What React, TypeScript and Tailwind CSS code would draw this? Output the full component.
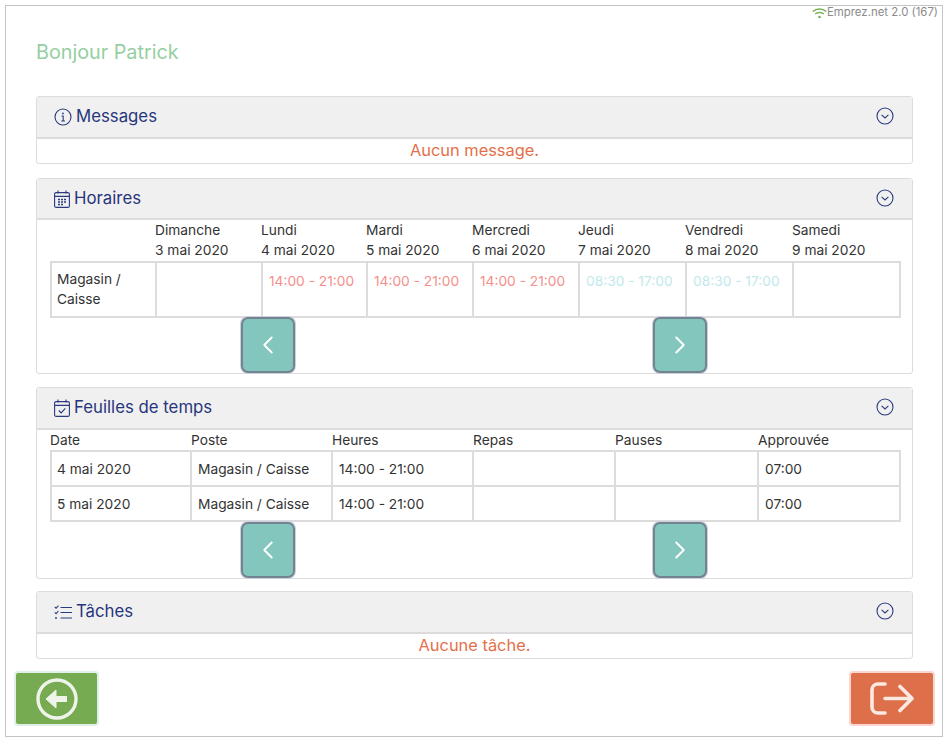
import type { ReactNode } from 'react';
import { ChevronLeft, ChevronRight } from 'lucide-react';

const days = [
  ['Dimanche', '3 mai 2020'],
  ['Lundi', '4 mai 2020'],
  ['Mardi', '5 mai 2020'],
  ['Mercredi', '6 mai 2020'],
  ['Jeudi', '7 mai 2020'],
  ['Vendredi', '8 mai 2020'],
  ['Samedi', '9 mai 2020'],
];

const shifts = [
  { text: '', color: '' },
  { text: '14:00 - 21:00', color: 'text-[#f58f8c]' },
  { text: '14:00 - 21:00', color: 'text-[#f58f8c]' },
  { text: '14:00 - 21:00', color: 'text-[#f58f8c]' },
  { text: '08:30 - 17:00', color: 'text-[#bfe9ec]' },
  { text: '08:30 - 17:00', color: 'text-[#bfe9ec]' },
  { text: '', color: '' },
];

const sheetHeaders = ['Date', 'Poste', 'Heures', 'Repas', 'Pauses', 'Approuvée'];
const sheetRows = [
  ['4 mai 2020', 'Magasin / Caisse', '14:00 - 21:00', '', '', '07:00'],
  ['5 mai 2020', 'Magasin / Caisse', '14:00 - 21:00', '', '', '07:00'],
];

function InfoIcon() {
  return (
    <svg width="18" height="18" viewBox="0 0 18 18" fill="none" stroke="#2b3a7f" strokeWidth="1.1">
      <circle cx="9" cy="9" r="8" />
      <path d="M7.5 8h1.7v5M7.2 13h3.8" />
      <circle cx="8.9" cy="5.4" r="0.9" fill="#2b3a7f" stroke="none" />
    </svg>
  );
}

function CalendarIcon() {
  return (
    <svg width="16" height="18" viewBox="0 0 16 18" fill="none" stroke="#2b3a7f" strokeWidth="1.1">
      <rect x="0.6" y="2.6" width="14.8" height="14.8" rx="1.5" />
      <path d="M0.6 6.4h14.8M4 0.6v3M12 0.6v3" />
      <path d="M4 9.500h2M7 9.500h2M10 9.500h2M4 12h2M7 12h2M10 12h2M4 14.500h2M7 14.500h2" strokeWidth="1.4" />
    </svg>
  );
}

function CalendarCheckIcon() {
  return (
    <svg width="16" height="18" viewBox="0 0 16 18" fill="none" stroke="#2b3a7f" strokeWidth="1.1">
      <rect x="0.6" y="2.6" width="14.8" height="14.8" rx="1.5" />
      <path d="M0.6 6.4h14.8M4 0.6v3M12 0.6v3" />
      <path d="M4.8 11.500l2.3 2.4 4.2-4.6" />
    </svg>
  );
}

function TasksIcon() {
  return (
    <svg width="18" height="15" viewBox="0 0 18 15" fill="none" stroke="#2b3a7f" strokeWidth="1.1">
      <path d="M0.8 2l1.3 1.3L4.400 0.6M0.8 7.400l1.3 1.3 2.3-2.7" />
      <circle cx="2" cy="13" r="0.9" fill="#2b3a7f" stroke="none" />
      <path d="M6.500 2.500H18M6.500 7.500H18M6.500 13H18" />
    </svg>
  );
}

function ToggleIcon() {
  return (
    <svg className="mb-[2px]" width="18" height="18" viewBox="0 0 18 18" fill="none" stroke="#2b3a7f" strokeWidth="1.1">
      <circle cx="9" cy="9" r="8" />
      <path d="M5.6 7.800L9 11l3.400-3.200" />
    </svg>
  );
}

function WifiIcon() {
  return (
    <svg width="15" height="11" viewBox="0 0 15 11" fill="none" stroke="#76ae51" strokeWidth="1.4">
      <path d="M0.8 3.600C4.400 0.1 10.600 0.1 14.200 3.600" />
      <path d="M3.200 6C5.500 3.900 9.500 3.900 11.800 6" />
      <circle cx="7.500" cy="9" r="1.3" fill="#76ae51" stroke="none" />
    </svg>
  );
}

function Panel({
  icon,
  title,
  className,
  headerHeight = 'h-[42px]',
  children,
}: {
  icon: ReactNode;
  title: string;
  className: string;
  headerHeight?: string;
  children: ReactNode;
}) {
  return (
    <section className={`rounded-[3px] border border-[#dcdcdc] bg-white ${className}`}>
      <header className={`flex items-center justify-between border-b-2 border-[#dcdcdc] bg-[#f0f0f0] pl-[17px] pr-[18px] ${headerHeight}`}>
        <div className="flex items-center gap-[4px]">
          {icon}
          <span className="text-[16.8px] text-[#27367c]">{title}</span>
        </div>
        <ToggleIcon />
      </header>
      {children}
    </section>
  );
}

function EmptyRow({ text }: { text: string }) {
  return <div className="flex h-[24px] items-center justify-center pb-px text-[16.4px] text-[#e46f4b]">{text}</div>;
}

function Pager() {
  return (
    <div className="flex h-[56px] pl-[204px]">
      <button className="flex h-[56px] w-[54px] items-center justify-center rounded-[7px] border-2 border-[#74848f] bg-[#82c6bd] shadow-[0_0_0_1px_#c9d0e4]">
        <ChevronLeft className="size-[30px] text-white" strokeWidth={1.5} />
      </button>
      <button className="ml-[358px] flex h-[56px] w-[54px] items-center justify-center rounded-[7px] border-2 border-[#74848f] bg-[#82c6bd] shadow-[0_0_0_1px_#c9d0e4]">
        <ChevronRight className="size-[30px] text-white" strokeWidth={1.5} />
      </button>
    </div>
  );
}

export default function App() {
  return (
    <div className="h-[744px] w-[948px] bg-white p-[5px] font-['Inter',sans-serif] text-[13.75px] text-[#333]">
      <div className="h-[732px] w-[938px] border border-[#c4c4c4]">
        <div className="flex h-[11px] items-center justify-end pr-[4px] pt-[3px] text-[11.4px] text-[#8b8b8b]">
          <WifiIcon />
          <span>Emprez.net 2.0 (167)</span>
        </div>
        <div className="pl-[30px] pr-[29px]">
          <h1 className="mt-[23px] text-[19.75px] leading-[24px] text-[#95cfa2]">Bonjour Patrick</h1>
          <div className="mt-[32px] flex flex-col">
            <Panel icon={<InfoIcon />} title="Messages" className="">
              <EmptyRow text="Aucun message." />
            </Panel>
            <Panel icon={<CalendarIcon />} title="Horaires" className="mt-[14px]" headerHeight="h-[41px]">
              <div className="pl-[13px] pr-[11px]">
                <div className="grid h-[41px] grid-cols-[105px_106px_105px_106px_106px_107px_107px_109px] items-center pb-[2px] leading-[20px]">
                  <div />
                  {days.map(([day, date]) => (
                    <div key={day}>
                      <div>{day}</div>
                      <div>{date}</div>
                    </div>
                  ))}
                </div>
                <div className="grid h-[57px] grid-cols-[103px_106px_105px_106px_106px_107px_107px_107px] border-2 border-[#dcdcdc]">
                  <div className="flex items-center px-[5px] pb-[2px] leading-[20px]">Magasin / Caisse</div>
                  {shifts.map((s, i) => (
                    <div key={i} className={`border-l-2 border-[#dcdcdc] pl-[6px] pt-[8px] ${s.color}`}>
                      {s.text}
                    </div>
                  ))}
                </div>
              </div>
              <div className="-mt-px">
                <Pager />
              </div>
            </Panel>
            <Panel icon={<CalendarCheckIcon />} title="Feuilles de temps" className="mt-[13px]">
              <div className="pl-[13px] pr-[11px]">
                <div className="grid h-[20px] grid-cols-[141px_141px_141px_142px_143px_143px] items-center">
                  {sheetHeaders.map((h) => (
                    <div key={h}>{h}</div>
                  ))}
                </div>
                <div className="border-2 border-t-0 border-[#dcdcdc]">
                  {sheetRows.map((row, r) => (
                    <div key={r} className="grid h-[35px] grid-cols-[138px_141px_141px_142px_143px_142px] border-t-2 border-[#dcdcdc]">
                      {row.map((cell, c) => (
                        <div key={c} className={`flex items-center pt-px ${c > 0 ? 'border-l-2 border-[#dcdcdc] px-[6px]' : 'px-[5px]'}`}>
                          {cell}
                        </div>
                      ))}
                    </div>
                  ))}
                </div>
              </div>
              <Pager />
            </Panel>
            <Panel icon={<TasksIcon />} title="Tâches" className="mt-[12px]">
              <EmptyRow text="Aucune tâche." />
            </Panel>
          </div>
        </div>
        <div className="mt-[14px] flex justify-between pl-[10px] pr-[9px]">
          <button className="flex h-[51px] w-[81px] items-center justify-center rounded-[2px] bg-[#76ab52] shadow-[0_0_0_2px_#dff1e4]">
            <svg width="42" height="42" viewBox="0 0 42 42" fill="none" stroke="#eff4ea" strokeWidth="3.4">
              <circle cx="21" cy="21" r="19" />
              <path d="M31 21H17" strokeWidth="6" />
              <path d="M20 12l-10 9 10 9z" fill="#eff4ea" strokeWidth="1" strokeLinejoin="round" />
            </svg>
          </button>
          <button className="flex h-[51px] w-[82px] items-center justify-center rounded-[2px] bg-[#dd6f4a] shadow-[0_0_0_2px_#fbd5d0]">
            <svg width="44" height="33" viewBox="0 0 44 33" fill="none" stroke="#fbe9e2" strokeWidth="3.6" strokeLinecap="round" strokeLinejoin="round">
              <path d="M15 2H8C4.500 2 2 4.500 2 8v17c0 3.500 2.500 6 6 6h7" />
              <path d="M15 16.500h27M30 4.500l12 12-12 12" />
            </svg>
          </button>
        </div>
      </div>
    </div>
  );
}
